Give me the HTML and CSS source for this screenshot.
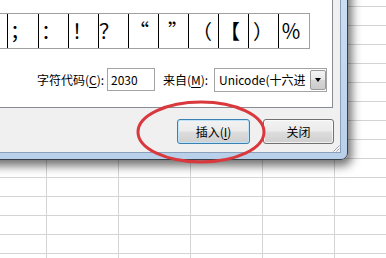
FILE: index.html
```html
<!DOCTYPE html>
<html lang="zh-CN">
<head>
<meta charset="utf-8">
<title>符号</title>
<link rel="stylesheet" href="styles.css">
</head>
<body>
<div class="sheet">
  <div class="dialog">
    <div class="client">
      <div class="panel">
        <div class="symbols">
          <div class="cell first"></div>
          <div class="cell wide p-semi">；</div>
          <div class="cell p-colon">：</div>
          <div class="cell p-excl">！</div>
          <div class="cell p-ques">？</div>
          <div class="cell p-lq">“</div>
          <div class="cell p-rq">”</div>
          <div class="cell p-lp">（</div>
          <div class="cell p-lb">【</div>
          <div class="cell p-rp">）</div>
          <div class="cell last p-pct">％</div>
        </div>
        <div class="code-row">
          <span class="lbl">字符代码(<u>C</u>):</span>
          <div class="textbox">2030</div>
          <span class="lbl lbl-from">来自(<u>M</u>):</span>
          <div class="combo">
            <span class="combo-text">Unicode(十六进</span>
            <span class="combo-btn"><span class="arrow"></span></span>
          </div>
        </div>
      </div>
      <div class="buttons">
        <button class="btn btn-default">插入(<u>I</u>)</button>
        <button class="btn btn-close">关闭</button>
      </div>
      <svg class="grip" width="8" height="8" viewBox="0 0 8 8">
        <path d="M7.5 1.5 L1.5 7.5 M7.5 4.5 L4.5 7.5" stroke="#9aa0a8" stroke-width="1" fill="none"/>
        <path d="M7.5 2.5 L2.5 7.5 M7.5 5.5 L5.5 7.5" stroke="#ffffff" stroke-width="1" fill="none"/>
      </svg>
    </div>
  </div>
  <svg class="annotation" width="132" height="66" viewBox="0 0 132 66">
    <ellipse cx="66" cy="32" rx="63" ry="30" fill="none" stroke="#d9383d" stroke-width="3"/>
  </svg>
</div>
</body>
</html>
```
FILE: styles.css
```css
* { box-sizing: border-box; }
html, body { margin: 0; padding: 0; }
body {
  width: 386px;
  height: 258px;
  overflow: hidden;
  background: #fff;
  font-family: "Noto Sans CJK SC", "Noto Sans", sans-serif;
  font-size: 12px;
  color: #000;
}
.sheet {
  position: relative;
  width: 386px;
  height: 258px;
  background-color: #fff;
  background-image:
    linear-gradient(to right, #d4d4d4 1px, transparent 1px),
    linear-gradient(to bottom, #d4d4d4 1px, transparent 1px);
  background-size: 72px 19px;
  background-position: 46px 6px;
}

/* dialog window */
.dialog {
  position: absolute;
  left: -30px;
  top: -20px;
  width: 378px;
  height: 180px;
  display: flex;
  border: 1px solid #384048;
  border-radius: 0 0 7px 7px;
  padding: 0 6px 6px 6px;
  background: linear-gradient(to bottom, #cddff2, #b9d0ea);
  box-shadow: 2px 4px 10px 2px rgba(0, 0, 0, 0.55);
}
.client {
  position: relative;
  flex: 1;
  display: flex;
  flex-direction: column;
  border: 1px solid #8ba0ba;
  background: #f0f0f0;
}
.panel {
  margin-right: 7px;
  border: 1px solid #898c95;
  background: #fff;
  padding: 30px 0 15px 0;
}

/* symbol grid */
.symbols {
  display: flex;
  height: 36px;
  border-top: 1px solid #a0a0a0;
  border-bottom: 1px solid #a0a0a0;
  border-right: 1px solid #a0a0a0;
  width: 331px;
}
.cell {
  width: 30px;
  border-right: 1px solid #000;
  font-size: 20px;
  line-height: 34px;
  white-space: nowrap;
  overflow: hidden;
}
.cell.first { width: 29px; }
.cell.wide { width: 31px; }
.cell.last { border-right: none; }
.p-semi { padding-left: 2px; }
.p-colon { padding-left: 2px; }
.p-excl { padding-left: 3px; }
.p-ques { padding-left: 0; }
.p-lq { padding-left: 0; }
.p-rq { padding-left: 9px; }
.p-lp { padding-left: 3px; }
.p-lb { padding-left: 1px; }
.p-rp { padding-left: 4px; }
.p-pct { padding-left: 2px; }

/* code row */
.code-row {
  display: grid;
  grid-template-columns: 70px 48px 59px 113px;
  align-items: center;
  margin-top: 19px;
  padding-left: 58px;
  height: 24px;
}
.lbl {
  font-size: 12px;
  line-height: 16px;
  white-space: nowrap;
}
.lbl u { text-underline-offset: 2px; }
.lbl-from { padding-left: 8px; }
.textbox {
  height: 23px;
  align-self: start;
  border: 1px solid #a3a3a3;
  padding-left: 3px;
  font-size: 12px;
  line-height: 21px;
}
.combo {
  height: 24px;
  display: flex;
  border: 1px solid #a3a3a3;
  background: #fff;
}
.combo-text {
  flex: 1;
  overflow: hidden;
  white-space: nowrap;
  padding-left: 4px;
  font-size: 12px;
  line-height: 22px;
}
.combo-btn {
  width: 16px;
  margin: 1px 0 1px 1px;
  border: 1px solid #9a9a9a;
  border-radius: 2px;
  background: linear-gradient(to bottom, #f4f4f4 0%, #e6e6e6 50%, #d6d6d6 51%, #cbcbcb 100%);
  display: flex;
  align-items: center;
  justify-content: center;
}
.arrow {
  width: 0;
  height: 0;
  border-left: 3.5px solid transparent;
  border-right: 3.5px solid transparent;
  border-top: 4px solid #000;
}

/* buttons */
.buttons {
  display: flex;
  justify-content: flex-end;
  gap: 13px;
  margin-top: 11px;
  padding-right: 6px;
}
.btn {
  height: 25px;
  padding: 0;
  border: 1px solid #707070;
  border-radius: 3px;
  background: linear-gradient(to bottom, #f2f2f2 0%, #ebebeb 48%, #dddddd 52%, #cfcfcf 100%);
  box-shadow: inset 0 0 0 1px rgba(255, 255, 255, 0.7);
  font-family: "Noto Sans CJK SC", "Noto Sans", sans-serif;
  font-size: 12px;
  line-height: 21px;
  color: #000;
}
.btn u { text-underline-offset: 2px; }
.btn-default {
  width: 73px;
  border-color: #3c7fb1;
  box-shadow: inset 0 0 0 1px #bfe3f7;
}
.btn-close { width: 71px; }

.grip {
  position: absolute;
  right: 0;
  bottom: 0;
}

/* red annotation ring */
.annotation {
  position: absolute;
  left: 135px;
  top: 100px;
}
```
